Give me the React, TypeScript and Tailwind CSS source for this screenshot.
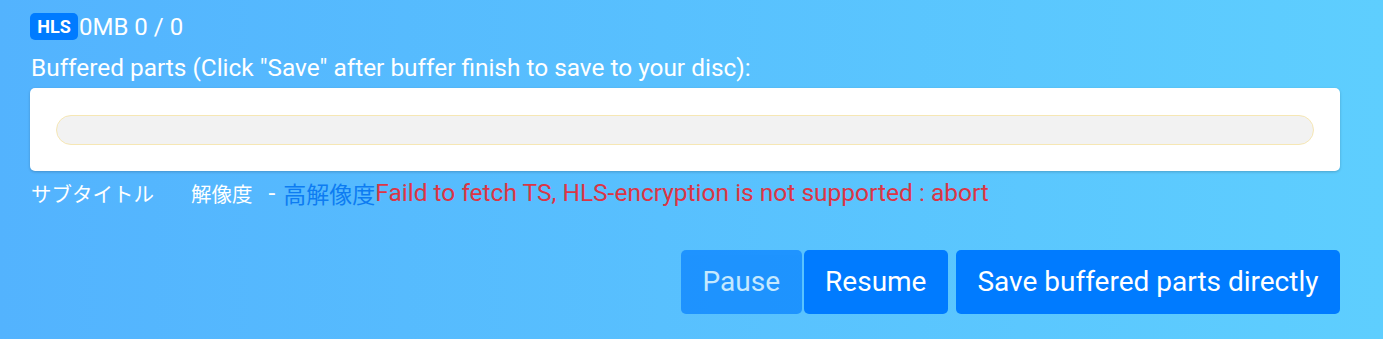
import React from "react";

const cjk = { fontFamily: "'Noto Sans CJK JP', sans-serif" };

export default function App() {
  return (
    <div
      className="w-[1383px] h-[339px] bg-gradient-to-r from-[#53b3fe] to-[#5ecefe] pl-[30px] pr-[43px] pt-[13px] text-white overflow-hidden"
      style={{ fontFamily: "Roboto, 'Noto Sans CJK JP', sans-serif" }}
    >
      <div className="flex items-center h-[27px]">
        <span className="bg-[#007bff] rounded-[5px] h-[27px] w-[48px] flex items-center justify-center text-[18px] font-bold leading-none">
          HLS
        </span>
        <span className="text-[24px] leading-none ml-[1px]">0MB 0 / 0</span>
      </div>
      <div className="text-[24.4px] leading-none mt-[16px] ml-[1px]">
        Buffered parts (Click "Save" after buffer finish to save to your disc):
      </div>
      <div className="mt-[8px] bg-white rounded-[5px] shadow-[0_1px_3px_rgba(0,0,0,0.2)] h-[83px] px-[26px] flex items-center">
        <div className="w-full h-[30px] rounded-full bg-[#f2f2f2] border border-[#f6e7b4]"></div>
      </div>
      <div className="flex items-center mt-[10px] leading-none h-[24px]">
        <span className="ml-[1px] w-[160px] text-[20.5px]" style={cjk}>
          サブタイトル
        </span>
        <span className="text-[20.5px]" style={cjk}>解像度</span>
        <span className="text-[24.5px] ml-[16px] mr-[8px]">-</span>
        <span className="text-[#0d7cf2] text-[23px]" style={cjk}>
          高解像度
        </span>
        <span className="text-[#dc3545] text-[24.5px]">
          Faild to fetch TS, HLS-encryption is not supported : abort
        </span>
      </div>
      <div className="flex justify-end mt-[45px]">
        <button className="h-[64px] px-[21.5px] rounded-[5px] bg-[#007bff] opacity-65 text-[28px] text-white leading-none">
          Pause
        </button>
        <button className="h-[64px] px-[21.5px] ml-[2px] rounded-[5px] bg-[#007bff] text-[28px] text-white leading-none">
          Resume
        </button>
        <button className="h-[64px] px-[21.5px] ml-[8px] rounded-[5px] bg-[#007bff] text-[28px] text-white leading-none">
          Save buffered parts directly
        </button>
      </div>
    </div>
  );
}
